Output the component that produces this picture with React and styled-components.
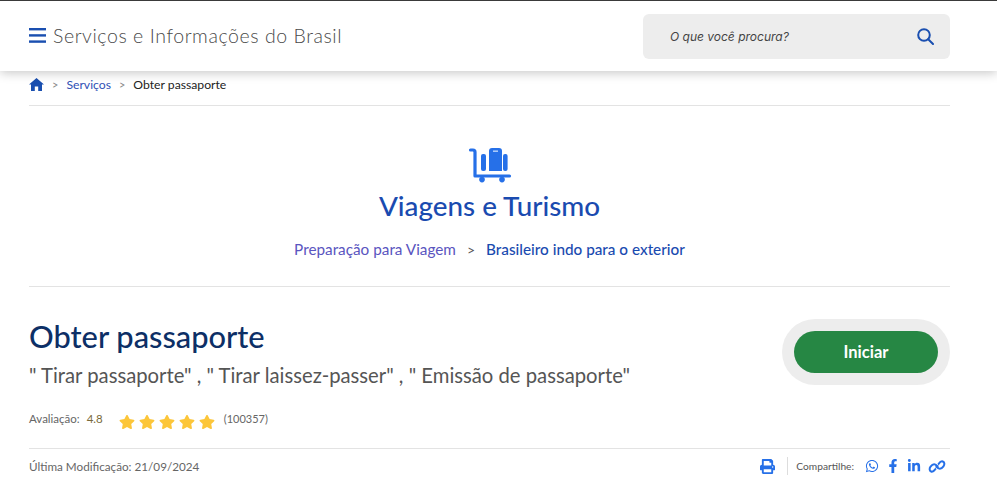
import React from 'react';
import styled, { createGlobalStyle } from 'styled-components';
import { FaPrint, FaWhatsapp, FaFacebookF, FaLinkedinIn, FaStar } from 'react-icons/fa';

const GlobalStyle = createGlobalStyle`
  html, body {
    margin: 0;
    padding: 0;
    background: #fff;
    overflow: hidden;
    font-family: 'Lato', 'Liberation Sans', sans-serif;
  }
`;

const Page = styled.div`
  width: 997px;
  height: 481px;
  overflow: hidden;
`;

const Header = styled.header`
  height: 70px;
  border-top: 1px solid #3a3a3a;
  box-shadow: 0 2px 10px rgba(0, 0, 0, 0.22);
  padding: 0 47px 0 29px;
  display: flex;
  align-items: center;
  justify-content: space-between;
  position: relative;
`;

const Brand = styled.div`
  display: flex;
  align-items: center;
  gap: 7px;
  margin-top: -2px;
  color: #4a4a4a;
  font-size: 19.5px;
  font-weight: 300;
  letter-spacing: 0.57px;
`;

const Search = styled.div`
  width: 307px;
  height: 45px;
  margin-top: 1px;
  box-sizing: border-box;
  background: #ededed;
  border-radius: 6px;
  padding: 0 16px 0 27px;
  display: flex;
  align-items: center;
  justify-content: space-between;
  font-family: 'Inter', sans-serif;
  font-style: italic;
  font-size: 12px;
  color: #444;
`;

const Content = styled.main`
  padding: 0 47px 0 29px;
`;

const Crumbs = styled.nav`
  height: 27px;
  padding-bottom: 7px;
  display: flex;
  align-items: center;
  font-size: 12.2px;
  border-bottom: 1px solid #e3e3e3;
`;

const Sep = styled.span`
  color: #888;
  font-size: 11px;
  margin: 0 8px;
`;

const CrumbLink = styled.span`
  color: #2f50b5;
`;

const CrumbCurrent = styled.span`
  color: #222;
`;

const Category = styled.section`
  height: 181px;
  box-sizing: border-box;
  padding-top: 41px;
  display: flex;
  flex-direction: column;
  align-items: center;
  border-bottom: 1px solid #e3e3e3;
`;

const CategoryTitle = styled.h2`
  margin: 7px 0 0;
  font-size: 27.8px;
  line-height: 32px;
  font-weight: 500;
  color: #1a4bb0;
`;

const SubNav = styled.div`
  margin-top: 18px;
  font-size: 15.3px;
  display: flex;
  align-items: center;
`;

const SubLink = styled.span`
  color: #5a55c0;
`;

const SubSep = styled.span`
  color: #555;
  margin: 0 11px;
  font-size: 14px;
`;

const SubCurrent = styled.span`
  color: #1a4bb0;
  font-weight: 500;
`;

const Service = styled.section`
  height: 162px;
  box-sizing: border-box;
  padding-top: 32px;
  display: flex;
  justify-content: space-between;
  border-bottom: 1px solid #e3e3e3;
`;

const Title = styled.h1`
  margin: 0;
  font-size: 30.8px;
  line-height: 36px;
  font-weight: 500;
  color: #0d2f66;
`;

const Aliases = styled.p`
  margin: 7px 0 0;
  font-size: 20.25px;
  line-height: 26px;
  color: #555;
`;

const Rating = styled.div`
  margin-top: 24px;
  display: flex;
  align-items: flex-start;
  font-size: 11.5px;
  line-height: 14px;
  color: #666;
`;

const Score = styled.span`
  margin-left: 7px;
  color: #7a6a3a;
`;

const Stars = styled.div`
  display: flex;
  gap: 4px;
  margin: 2px 0 0 16px;
  svg { color: #fcc63a; font-size: 16px; display: block; }
`;

const Count = styled.span`
  margin-left: 9px;
  font-size: 11px;
`;

const StartWrap = styled.div`
  width: 168px;
  height: 66px;
  box-sizing: border-box;
  padding: 12px;
  background: #ededed;
  border-radius: 33px;
`;

const StartButton = styled.button`
  width: 100%;
  height: 42px;
  border: 0;
  border-radius: 21px;
  background: #268744;
  color: #fff;
  font-family: inherit;
  font-size: 16.5px;
  font-weight: 700;
`;

const Footer = styled.footer`
  height: 34px;
  display: flex;
  align-items: center;
  justify-content: space-between;
  font-size: 11.7px;
  color: #666;
`;

const Share = styled.div`
  display: flex;
  align-items: center;
  color: #555;
  font-size: 10.2px;
  svg { color: #2670e8; display: block; }
`;

const Divider = styled.span`
  width: 1px;
  height: 18px;
  background: #ddd;
  margin: 0 8px 0 12px;
`;

const ShareIcons = styled.div`
  display: flex;
  align-items: center;
  gap: 7px;
  margin: 0 4px 0 11px;
`;

const MenuIcon = () => (
  <svg width="17" height="15" viewBox="0 0 17 15" fill="#1a4fb0">
    <rect x="0" y="0" width="17" height="2.4" />
    <rect x="0" y="6.2" width="17" height="2.4" />
    <rect x="0" y="12.4" width="17" height="2.4" />
  </svg>
);

const SearchIcon = () => (
  <svg width="17" height="17" viewBox="0 0 17 17" fill="none" stroke="#1a4fb0" strokeWidth="2">
    <circle cx="7" cy="7" r="5.8" />
    <path d="M11.2 11.2 16 16" strokeLinecap="round" />
  </svg>
);

const HomeIcon = () => (
  <svg width="15" height="13" viewBox="0 0 15 13" fill="#1a4fb0">
    <path d="M7.5 0 15 6.6h-2V13H9.2V8.6H5.8V13H2V6.6H0z" />
  </svg>
);

const CartIcon = () => (
  <svg width="44" height="36" viewBox="0 0 44 36" fill="none">
    <path d="M2.5 3H5a2 2 0 0 1 2 2v24h34.5" stroke="#2670e8" strokeWidth="3.2" strokeLinecap="round" strokeLinejoin="round" />
    <rect x="13" y="7" width="5" height="17" rx="2" fill="#2670e8" />
    <rect x="35" y="7" width="4.6" height="17" rx="2" fill="#2670e8" />
    <path d="M21 4a3 3 0 0 1 3-3h7a3 3 0 0 1 3 3v20H21z" fill="#2670e8" />
    <rect x="25" y="3.4" width="5" height="1.6" fill="#a9c8f8" />
    <circle cx="14" cy="32.6" r="2.8" fill="#2670e8" />
    <circle cx="34" cy="32.6" r="2.8" fill="#2670e8" />
  </svg>
);

const LinkIcon = () => (
  <svg width="18" height="15" viewBox="0 0 17 14" fill="none" stroke="#2670e8" strokeWidth="1.9">
    <path d="M7 9.5c-1.2 1.6-2.8 2.8-4 2.2C1.4 11 1 9 2.4 7.2 3.6 5.6 5.6 4.6 7 5.2c.9.4 1.2 1.3.9 2.3" strokeLinecap="round" />
    <path d="M10 4.5c1.2-1.6 2.8-2.8 4-2.2 1.6.7 2 2.7.6 4.5-1.2 1.6-3.2 2.6-4.6 2-.9-.4-1.2-1.3-.9-2.3" strokeLinecap="round" />
  </svg>
);

const App = () => {
  return (
    <Page>
      <GlobalStyle />
      <Header>
        <Brand>
          <MenuIcon />
          <span>Serviços e Informações do Brasil</span>
        </Brand>
        <Search>
          <span>O que você procura?</span>
          <SearchIcon />
        </Search>
      </Header>
      <Content>
        <Crumbs>
          <HomeIcon />
          <Sep>&gt;</Sep>
          <CrumbLink>Serviços</CrumbLink>
          <Sep>&gt;</Sep>
          <CrumbCurrent>Obter passaporte</CrumbCurrent>
        </Crumbs>
        <Category>
          <CartIcon />
          <CategoryTitle>Viagens e Turismo</CategoryTitle>
          <SubNav>
            <SubLink>Preparação para Viagem</SubLink>
            <SubSep>&gt;</SubSep>
            <SubCurrent>Brasileiro indo para o exterior</SubCurrent>
          </SubNav>
        </Category>
        <Service>
          <div>
            <Title>Obter passaporte</Title>
            <Aliases>" Tirar passaporte" , " Tirar laissez-passer" , " Emissão de passaporte"</Aliases>
            <Rating>
              <span>Avaliação:</span>
              <Score>4.8</Score>
              <Stars>
                {[1, 2, 3, 4, 5].map(n => <FaStar key={n} />)}
              </Stars>
              <Count>(100357)</Count>
            </Rating>
          </div>
          <StartWrap>
            <StartButton>Iniciar</StartButton>
          </StartWrap>
        </Service>
        <Footer>
          <span>Última Modificação: 21/09/2024</span>
          <Share>
            <FaPrint size={15} />
            <Divider />
            <span>Compartilhe:</span>
            <ShareIcons>
              <FaWhatsapp size={14} />
              <FaFacebookF size={14} />
              <FaLinkedinIn size={14} />
              <LinkIcon />
            </ShareIcons>
          </Share>
        </Footer>
      </Content>
    </Page>
  );
};

export default App;
